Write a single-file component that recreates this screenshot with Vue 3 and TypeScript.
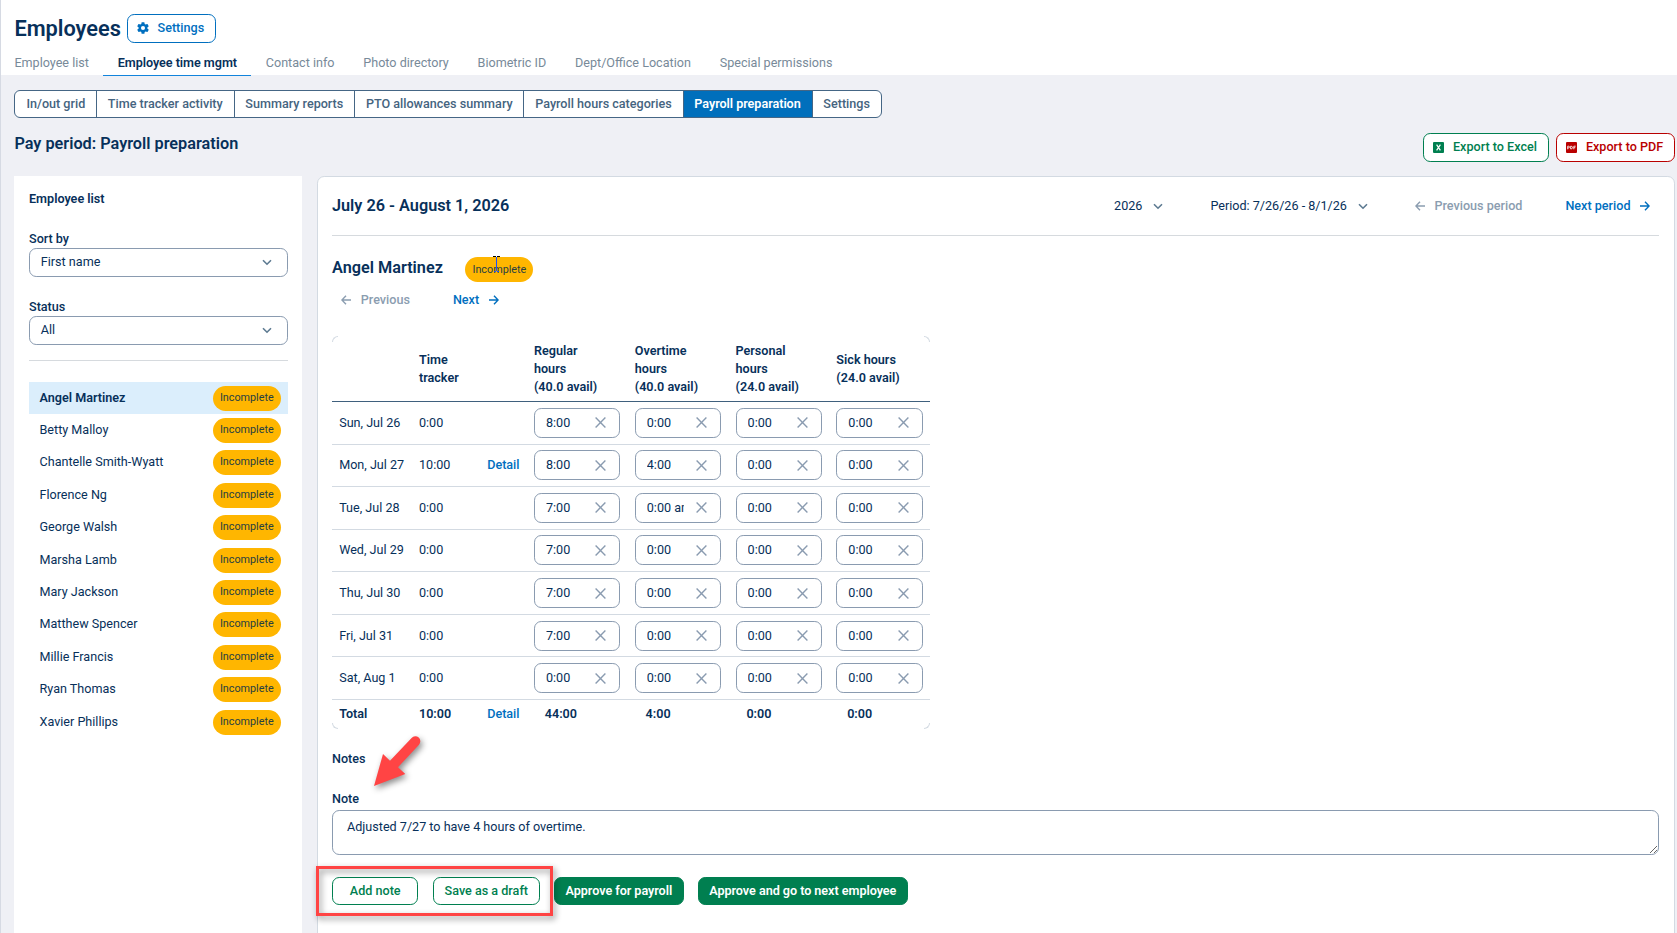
<script setup lang="ts">
interface DayRow {
  day: string
  tracker: string
  detail?: boolean
  hours: string[]
}

const tabs = ['Employee list', 'Employee time mgmt', 'Contact info', 'Photo directory', 'Biometric ID', 'Dept/Office Location', 'Special permissions']
const activeTab = 'Employee time mgmt'

const views = ['In/out grid', 'Time tracker activity', 'Summary reports', 'PTO allowances summary', 'Payroll hours categories', 'Payroll preparation', 'Settings']
const activeView = 'Payroll preparation'

const employees = ['Angel Martinez', 'Betty Malloy', 'Chantelle Smith-Wyatt', 'Florence Ng', 'George Walsh', 'Marsha Lamb', 'Mary Jackson', 'Matthew Spencer', 'Millie Francis', 'Ryan Thomas', 'Xavier Phillips']
const selected = 'Angel Martinez'

const headers: string[][] = [
  [],
  ['Time', 'tracker'],
  [],
  ['Regular', 'hours', '(40.0 avail)'],
  ['Overtime', 'hours', '(40.0 avail)'],
  ['Personal', 'hours', '(24.0 avail)'],
  ['Sick hours', '(24.0 avail)'],
]

const days: DayRow[] = [
  { day: 'Sun, Jul 26', tracker: '0:00', hours: ['8:00', '0:00', '0:00', '0:00'] },
  { day: 'Mon, Jul 27', tracker: '10:00', detail: true, hours: ['8:00', '4:00', '0:00', '0:00'] },
  { day: 'Tue, Jul 28', tracker: '0:00', hours: ['7:00', '0:00 am', '0:00', '0:00'] },
  { day: 'Wed, Jul 29', tracker: '0:00', hours: ['7:00', '0:00', '0:00', '0:00'] },
  { day: 'Thu, Jul 30', tracker: '0:00', hours: ['7:00', '0:00', '0:00', '0:00'] },
  { day: 'Fri, Jul 31', tracker: '0:00', hours: ['7:00', '0:00', '0:00', '0:00'] },
  { day: 'Sat, Aug 1', tracker: '0:00', hours: ['0:00', '0:00', '0:00', '0:00'] },
]
const totals = ['44:00', '4:00', '0:00', '0:00']
const note = 'Adjusted 7/27 to have 4 hours of overtime.'
</script>

<template>
  <div class="page">
    <header class="top">
      <div class="title-row">
        <h1>Employees</h1>
        <button class="btn outline-blue">
          <svg class="gear" viewBox="0 0 24 24" width="14" height="14"><path fill="currentColor" fill-rule="evenodd" d="M19.4 13c.04-.32.07-.66.07-1s-.03-.68-.07-1l2.1-1.65a.5.5 0 0 0 .13-.64l-2-3.46a.5.5 0 0 0-.61-.22l-2.49 1a7.3 7.3 0 0 0-1.69-.98l-.38-2.65A.49.49 0 0 0 14 2h-4a.49.49 0 0 0-.49.42l-.38 2.65c-.61.25-1.17.58-1.69.98l-2.49-1a.5.5 0 0 0-.61.22l-2 3.46a.5.5 0 0 0 .13.64L4.57 11a8 8 0 0 0 0 2l-2.11 1.65a.5.5 0 0 0-.12.64l2 3.46c.12.22.39.3.61.22l2.49-1c.52.4 1.08.73 1.69.98l.38 2.65c.04.24.24.42.49.42h4c.25 0 .46-.18.49-.42l.38-2.65c.61-.25 1.17-.58 1.69-.98l2.49 1c.22.08.49 0 .61-.22l2-3.46a.5.5 0 0 0-.12-.64zM12 15.5a3.5 3.5 0 1 1 0-7 3.5 3.5 0 0 1 0 7z" /></svg>
          <span>Settings</span>
        </button>
      </div>
      <nav class="tabs">
        <a v-for="t in tabs" :key="t" :class="{ active: t === activeTab }">{{ t }}</a>
      </nav>
    </header>

    <nav class="views">
      <a v-for="v in views" :key="v" :class="{ active: v === activeView }">{{ v }}</a>
    </nav>

    <div class="heading-row">
      <h2>Pay period: Payroll preparation</h2>
      <div class="exports">
        <button class="btn outline-green">
          <svg viewBox="0 0 11 11" width="11" height="11"><rect width="11" height="11" rx="1" fill="currentColor" /><path d="M3.6 2.6 7.4 8.4M7.4 2.6 3.6 8.4" stroke="#fff" stroke-width="1.2" /></svg>
          <span>Export to Excel</span>
        </button>
        <button class="btn outline-red">
          <svg viewBox="0 0 11 11" width="11" height="11"><rect width="11" height="11" rx="1" fill="currentColor" /><path d="M1.7 7.3V4.2H2.6a.8.8 0 0 1 0 1.7H1.7M4.6 4.2V6.9H5.1a1.2 1.2 0 0 0 0-2.7zM7.8 7.3V4.2H9.7M7.8 5.7H9.3" fill="none" stroke="#fff" stroke-width=".85" /></svg>
          <span>Export to PDF</span>
        </button>
      </div>
    </div>

    <div class="columns">
      <aside class="side">
        <h3>Employee list</h3>
        <label>Sort by</label>
        <div class="select">
          <span>First name</span>
          <svg class="chev" viewBox="0 0 10 7" width="10" height="7"><path d="M1 1.2 5 5.2 9 1.2" /></svg>
        </div>
        <label class="status-label">Status</label>
        <div class="select">
          <span>All</span>
          <svg class="chev" viewBox="0 0 10 7" width="10" height="7"><path d="M1 1.2 5 5.2 9 1.2" /></svg>
        </div>
        <ul>
          <li v-for="e in employees" :key="e" :class="{ active: e === selected }">
            <span>{{ e }}</span><span class="badge">Incomplete</span>
          </li>
        </ul>
      </aside>

      <main class="card">
        <div class="period-row">
          <h2>July 26 - August 1, 2026</h2>
          <div class="period-nav">
            <span class="drop">2026 <svg class="chev" viewBox="0 0 10 7" width="10" height="7"><path d="M1 1.2 5 5.2 9 1.2" /></svg></span>
            <span class="drop">Period: 7/26/26 - 8/1/26 <svg class="chev" viewBox="0 0 10 7" width="10" height="7"><path d="M1 1.2 5 5.2 9 1.2" /></svg></span>
            <span class="link muted prev"><svg class="arrow" viewBox="0 0 10 10" width="10" height="10"><path d="M10 5H1M5 .8.9 5 5 9.2" /></svg>Previous period</span>
            <span class="link">Next period<svg class="arrow" viewBox="0 0 10 10" width="10" height="10"><path d="M0 5H9M5 .8 9.1 5 5 9.2" /></svg></span>
          </div>
        </div>

        <div class="name-row">
          <h2>Angel Martinez</h2>
          <span class="badge">Incomplete
            <svg class="ibeam" viewBox="0 0 9 17" width="9" height="17"><path d="M1 .5H4M5 .5H8" stroke="#000" /><path d="M4.5 1V15" stroke="#1c4fff" /><path d="M2 15.5H4M5 15.5H7" stroke="#1c4fff" /></svg>
          </span>
        </div>
        <div class="step-row">
          <span class="link muted"><svg class="arrow" viewBox="0 0 10 10" width="10" height="10"><path d="M10 5H1M5 .8.9 5 5 9.2" /></svg>Previous</span>
          <span class="link">Next<svg class="arrow" viewBox="0 0 10 10" width="10" height="10"><path d="M0 5H9M5 .8 9.1 5 5 9.2" /></svg></span>
        </div>

        <section class="grid">
          <i class="corner tl" /><i class="corner tr" /><i class="corner bl" /><i class="corner br" />
          <div class="row head">
            <div v-for="(h, i) in headers" :key="i"><div v-for="l in h" :key="l">{{ l }}</div></div>
          </div>
          <div v-for="d in days" :key="d.day" class="row day">
            <div>{{ d.day }}</div>
            <div>{{ d.tracker }}</div>
            <div><a v-if="d.detail" class="detail">Detail</a></div>
            <div v-for="(h, i) in d.hours" :key="i">
              <div class="field">
                <span>{{ h }}</span>
                <svg viewBox="0 0 11 11" width="11" height="11"><path d="M.6.6 10.4 10.4M10.4.6.6 10.4" /></svg>
              </div>
            </div>
          </div>
          <div class="row total">
            <div>Total</div>
            <div>10:00</div>
            <div><a class="detail">Detail</a></div>
            <div v-for="(t, i) in totals" :key="i" class="sum">{{ t }}</div>
          </div>
        </section>

        <div class="notes-title">Notes</div>
        <div class="note-label">Note</div>
        <textarea :value="note" readonly spellcheck="false" />

        <div class="actions">
          <button class="btn outline-green add">Add note</button>
          <button class="btn outline-green">Save as a draft</button>
          <button class="btn solid">Approve for payroll</button>
          <button class="btn solid">Approve and go to next employee</button>
          <div class="callout" />
          <svg class="pointer" viewBox="0 0 60 64" width="60" height="64">
            <path d="M4 56 13 24 20 30.7 41.6 7.9A5 5 0 0 1 49 14.7L28 37.3 35.3 44Z" fill="#ff4444" />
          </svg>
        </div>
      </main>
    </div>
  </div>
</template>

<style>
body {
  background: #eff0f5;
  overflow: hidden;
}
</style>

<style scoped>
* {
  box-sizing: border-box;
}
.page {
  width: 1677px;
  height: 933px;
  overflow: hidden;
  border-left: 1px solid #d6dae3;
  background: #eff0f5;
  color: #07305a;
  font: 400 12.6px/18px Roboto, sans-serif;
}
h1, h2, h3, ul {
  margin: 0;
  padding: 0;
}
.top {
  height: 75px;
  padding: 14px 0 0 13.4px;
  background: #fff;
}
.title-row {
  display: flex;
  height: 29px;
  gap: 6px;
}
h1 {
  margin-top: 1px;
  font-size: 21.75px;
  font-weight: 600;
  line-height: 28px;
}
h2 {
  font-size: 16.25px;
  font-weight: 600;
  line-height: 20px;
}
h3 {
  font-size: 12.6px;
  font-weight: 600;
  line-height: 18px;
}
.btn {
  display: inline-flex;
  align-items: center;
  justify-content: center;
  height: 29px;
  padding: 0 10.8px 2px;
  border: 1px solid;
  border-radius: 7.2px;
  background: #fff;
  font: 500 12.6px/18px Roboto, sans-serif;
  white-space: nowrap;
}
.outline-blue {
  color: #006fbf;
  padding: 0 11px 2px 8px;
}
.gear {
  margin: 1px 7.7px 0 0;
}
.outline-green {
  color: #007f50;
}
.outline-red {
  color: #b90000;
}
.solid {
  border-color: #007f50;
  background: #007f50;
  color: #fff;
}
.tabs {
  display: flex;
  margin-top: 11px;
  margin-left: -14.4px;
}
.tabs a {
  height: 22px;
  padding: 0 14.4px;
  color: #788a99;
  line-height: 18px;
}
.tabs .active {
  border-bottom: 1px solid #1284dc;
  color: #07305a;
  font-weight: 600;
  letter-spacing: -0.035px;
}
.views {
  display: inline-flex;
  height: 28px;
  margin: 15px 0 0 13px;
  border: 1px solid #456685;
  border-radius: 6px;
  overflow: hidden;
  background: #fff;
}
.views a {
  padding: 0 10.8px;
  color: #456480;
  font-weight: 500;
  line-height: 26px;
}
.views a:first-child {
  padding-left: 11.4px;
}
.views a + a {
  border-left: 1px solid #456685;
}
.views .active {
  background: #006fbc;
  color: #fff;
  font-weight: 600;
  letter-spacing: -0.03px;
}
.heading-row {
  display: flex;
  justify-content: space-between;
  height: 58px;
  padding: 15px 2px 0 13.4px;
}
.heading-row h2 {
  margin-top: 1px;
}
.exports {
  display: flex;
  gap: 7px;
}
.exports .btn {
  padding: 0 10.8px 1px 8.8px;
}
.exports svg {
  margin: 1px 9.4px 0 0;
}
.columns {
  display: flex;
  align-items: flex-start;
  gap: 15px;
}
.side {
  width: 288px;
  height: 757px;
  margin-left: 13px;
  padding: 14px 14px 0 15px;
  background: #fff;
}
.side label {
  display: block;
  font-weight: 500;
}
.side h3 + label {
  margin-top: 22px;
}
.select {
  display: flex;
  align-items: center;
  justify-content: space-between;
  height: 29px;
  padding: 0 15.5px 2px 10.8px;
  border: 1px solid #8a9bb0;
  border-radius: 7.2px;
}
.side .status-label {
  margin-top: 21px;
}
.status-label + .select span {
  margin-top: 1px;
}
.select .chev {
  margin-top: 2px;
}
.chev path {
  fill: none;
  stroke: #5d7a91;
  stroke-width: 1.6;
}
ul {
  margin-top: 15px;
  padding-top: 21px;
  border-top: 1px solid #d6dade;
  list-style: none;
}
li {
  display: flex;
  align-items: center;
  justify-content: space-between;
  height: 32.4px;
  padding: 0 7.2px 0 10.5px;
}
li > span:first-child {
  margin-top: -1px;
}
li.active {
  background: #dbeefc;
  font-weight: 600;
}
.badge {
  position: relative;
  width: 68px;
  height: 25px;
  border-radius: 12.5px;
  background: #ffb600;
  color: #283f42;
  font-size: 10.8px;
  font-weight: 400;
  line-height: 23px;
  text-align: center;
}
.name-row .badge {
  line-height: 25px;
}
.ibeam {
  position: absolute;
  left: 27px;
  top: -1px;
}
.card {
  width: 1358px;
  height: 790px;
  padding: 0 15px 0 14px;
  border: 1px solid #d3dae2;
  border-radius: 7.2px;
  background: #fff;
}
.period-row {
  display: flex;
  align-items: center;
  justify-content: space-between;
  height: 59px;
  padding-right: 9px;
  border-bottom: 1px solid #d6dade;
}
.period-nav {
  display: flex;
}
.drop {
  display: flex;
  align-items: center;
  gap: 11px;
  margin-right: 47px;
}
.link {
  display: inline-flex;
  align-items: center;
  gap: 9.5px;
  color: #006fbf;
  font-weight: 500;
}
.muted {
  color: #8b9db0;
}
.prev {
  margin-right: 43px;
}
.arrow path {
  fill: none;
  stroke: currentColor;
  stroke-width: 1.4;
}
.name-row {
  display: flex;
  height: 46px;
  padding-top: 21px;
  gap: 21px;
}
.name-row h2 {
  margin: 1px 1.5px 0 0;
}
.step-row {
  display: flex;
  gap: 43px;
  height: 18px;
  margin-top: 9px;
  padding-left: 9.3px;
}
.grid {
  position: relative;
  width: 598px;
  height: 393px;
  margin-top: 27px;
}
.corner {
  position: absolute;
  width: 6px;
  height: 6px;
  border: 0 solid #d3dae2;
}
.tl {
  top: 0;
  left: 0;
  border-width: 1px 0 0 1px;
  border-top-left-radius: 6px;
}
.tr {
  top: 0;
  right: 0;
  border-width: 1px 1px 0 0;
  border-top-right-radius: 6px;
}
.bl {
  bottom: 0;
  left: 0;
  border-width: 0 0 1px 1px;
  border-bottom-left-radius: 6px;
}
.br {
  right: 0;
  bottom: 0;
  border-width: 0 1px 1px 0;
  border-bottom-right-radius: 6px;
}
.row {
  display: grid;
  grid-template-columns: 79.8px 68.2px 46.8px repeat(4, 100.8px);
  align-items: center;
}
.row > div {
  padding-left: 7.2px;
  white-space: nowrap;
}
.head {
  height: 66px;
  border-bottom: 1px solid #3f607d;
  font-weight: 600;
}
.day {
  height: 42.57px;
  border-bottom: 1px solid #d3dae2;
}
.total {
  height: 28px;
  font-weight: 600;
}
.row .sum {
  padding-left: 18px;
}
.detail {
  color: #006fbf;
  font-weight: 500;
}
.field {
  display: flex;
  align-items: center;
  justify-content: space-between;
  width: 86.4px;
  height: 30px;
  padding: 0 13px 0 11px;
  border: 1px solid #8a9bb0;
  border-radius: 7.2px;
}
.field span {
  width: 37.5px;
  overflow: hidden;
}
.field path {
  fill: none;
  stroke: #8a9bb0;
  stroke-width: 1.4;
}
.notes-title {
  margin-top: 21px;
  font-weight: 500;
}
.note-label {
  margin-top: 22px;
  font-weight: 500;
}
textarea {
  display: block;
  width: 1327px;
  height: 45px;
  margin-top: 2px;
  padding: 7px 14px;
  border: 1px solid #8a9bb0;
  border-radius: 7.2px;
  outline: 0;
  background: #fff;
  color: #07305a;
  font: 400 12.6px/18px Roboto, sans-serif;
}
.actions {
  position: relative;
  display: flex;
  gap: 14.4px;
  margin-top: 22px;
}
.actions .btn {
  height: 28px;
  padding-bottom: 1px;
}
.actions .add {
  width: 86.4px;
}
.actions .solid {
  padding: 0 10.3px 1px;
  font-weight: 600;
  letter-spacing: -0.03px;
}
.callout {
  position: absolute;
  left: -16px;
  top: -11px;
  width: 237px;
  height: 50px;
  border: 3px solid #ff4444;
  filter: drop-shadow(2px 3px 3px rgba(0, 0, 0, 0.45));
}
.pointer {
  position: absolute;
  left: 38px;
  top: -147px;
  overflow: visible;
  filter: drop-shadow(2px 3px 3px rgba(0, 0, 0, 0.45));
}
</style>
